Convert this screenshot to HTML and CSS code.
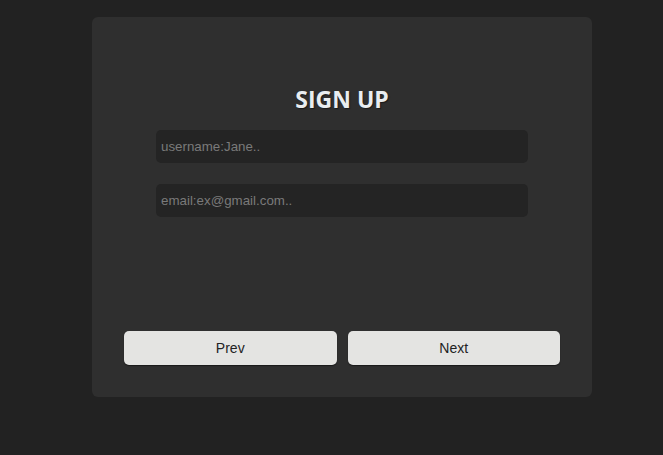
FILE: index.html
```html
<!DOCTYPE html>
<html lang="en">
<head>
<meta charset="utf-8">
<title>Sign up</title>
<link rel="stylesheet" href="styles.css">
</head>
<body>
<main class="page">
  <form class="card">
    <h1 class="title">SIGN UP</h1>
    <div class="fields">
      <input class="field" type="text" placeholder="username:Jane..">
      <input class="field" type="email" placeholder="email:ex@gmail.com..">
    </div>
    <div class="actions">
      <button type="button" class="btn">Prev</button>
      <button type="button" class="btn">Next</button>
    </div>
  </form>
</main>
</body>
</html>
```
FILE: styles.css
```css
html, body {
  margin: 0;
  padding: 0;
  background: #222222;
  height: 100%;
}
.page {
  padding: 17px 0 0 92px;
}
.card {
  box-sizing: border-box;
  width: 500px;
  height: 380px;
  background: #2f2f2f;
  border-radius: 6px;
  padding: 67px 32px 32px;
  display: flex;
  flex-direction: column;
  align-items: center;
}
.title {
  margin: 0;
  font-family: "Open Sans", "DejaVu Sans", sans-serif;
  font-weight: 700;
  font-size: 23px;
  line-height: 30px;
  color: #e9edf0;
  text-shadow: 1px 1px 1px #1a1a1a;
}
.fields {
  margin-top: 16px;
  display: flex;
  flex-direction: column;
  gap: 21px;
  width: 372px;
}
.field {
  box-sizing: border-box;
  height: 33px;
  width: 100%;
  border: none;
  border-radius: 5px;
  background: #242424;
  padding: 0 5px;
  font-family: "Liberation Sans", Arial, sans-serif;
  font-size: 13.333px;
  color: #cccccc;
  outline: none;
}
.field::placeholder {
  color: #7a7a7a;
}
.actions {
  margin-top: auto;
  display: flex;
  gap: 11px;
  width: 100%;
}
.btn {
  flex: 1;
  height: 34px;
  border: none;
  border-radius: 5px;
  background: #e4e4e2;
  box-shadow: 0 1px 1px #1a1a1a;
  font-family: "Liberation Sans", Arial, sans-serif;
  font-size: 14px;
  color: #222222;
  padding: 0;
}
```
